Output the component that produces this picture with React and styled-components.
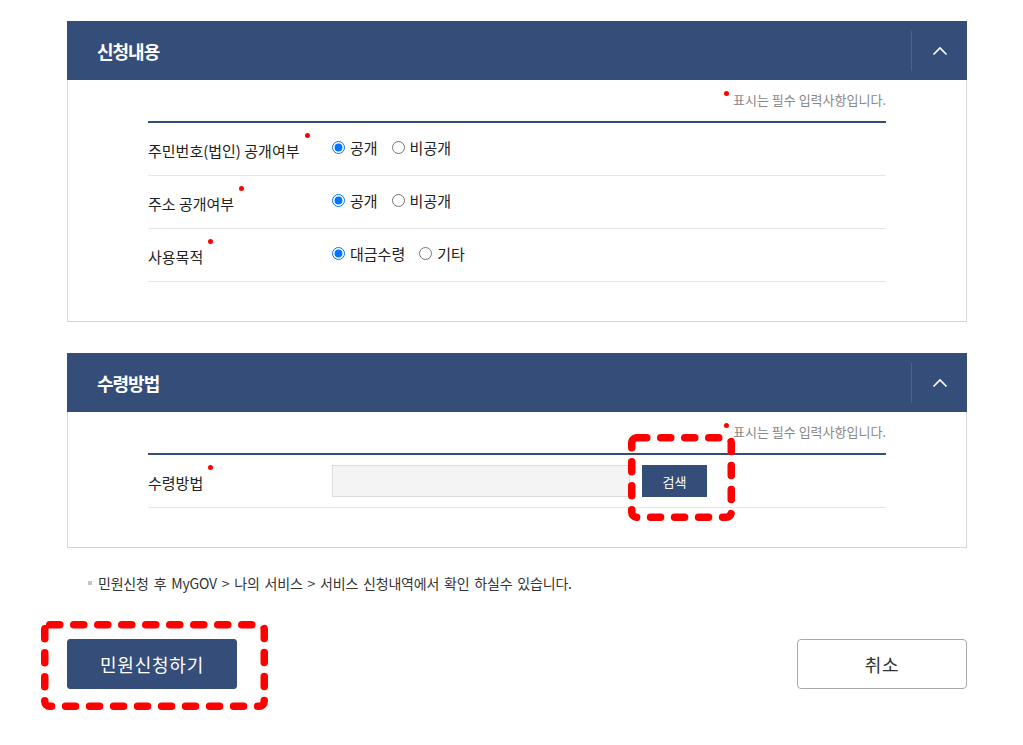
import React from "react";
import styled, { createGlobalStyle } from "styled-components";

const NAVY = "#354d79";

const GlobalStyle = createGlobalStyle`
  html, body { margin: 0; padding: 0; background: #fff; }
  body {
    font-family: "Noto Sans CJK KR", "Noto Sans", "Liberation Sans", sans-serif;
    color: #222;
  }
  * { box-sizing: border-box; }
`;

const Page = styled.div`
  width: 900px;
  margin: 21px 0 0 67px;
  padding-bottom: 40px;
`;

const Panel = styled.section`
  & + & { margin-top: 31px; }
`;

const PanelHeader = styled.div`
  height: 59px;
  background: ${NAVY};
  display: flex;
  align-items: center;
  justify-content: space-between;
  padding-left: 30px;
`;

const PanelTitle = styled.h2`
  margin: 0;
  font-size: 18px;
  font-weight: 700;
  color: #fff;
  letter-spacing: -1px;
`;

const Toggle = styled.button`
  width: 56px;
  height: 40px;
  border: 0;
  border-left: 1px solid rgba(255, 255, 255, 0.12);
  background: transparent;
  display: flex;
  align-items: center;
  justify-content: center;
  padding: 0;
  cursor: pointer;
`;

const PanelBody = styled.div`
  border: 1px solid #d6d6d6;
  border-top: 0;
  padding: 0 80px 39px;
`;

const RequiredNote = styled.p`
  margin: 0;
  padding-top: 10px;
  line-height: 20px;
  font-size: 13px;
  color: #888;
  text-align: right;
`;

const Dot = styled.span`
  display: inline-block;
  width: 5px;
  height: 5px;
  border-radius: 50%;
  background: #f00;
  vertical-align: top;
  margin-top: 1px;
  margin-right: 4px;
`;

const FormTable = styled.div`
  margin-top: 11px;
  border-top: 2px solid ${NAVY};
`;

const Row = styled.div`
  display: flex;
  align-items: center;
  height: 53px;
  border-bottom: 1px solid #e6e6e6;
`;

const Label = styled.div`
  width: 184px;
  flex-shrink: 0;
  padding-top: 2px;
  font-size: 15px;
  color: #222;
`;

const LabelText = styled.span`
  position: relative;
  &::after {
    content: "";
    position: absolute;
    right: -10px;
    top: -7px;
    width: 5px;
    height: 5px;
    border-radius: 50%;
    background: #f00;
  }
`;

const RadioGroup = styled.div`
  display: flex;
  align-items: center;
  gap: 14px;
  margin-top: -4px;
`;

const RadioItem = styled.label`
  display: inline-flex;
  align-items: center;
  gap: 5px;
  font-size: 15px;
  color: #222;
  cursor: pointer;
`;

const Radio = styled.input.attrs({ type: "radio" })`
  margin: 0;
  width: 13px;
  height: 13px;
`;

const FieldGroup = styled.div`
  display: flex;
  align-items: center;
  gap: 12px;
`;

const TextInput = styled.input`
  width: 298px;
  height: 32px;
  border: 1px solid #dcdcdc;
  background: #f4f4f4;
  padding: 0 8px;
  font-family: inherit;
  font-size: 14px;
`;

const AnnotatedWrap = styled.div`
  position: relative;
  display: inline-flex;
`;

const SearchButton = styled.button`
  width: 65px;
  height: 32px;
  border: 0;
  background: ${NAVY};
  color: #fff;
  font-family: inherit;
  font-size: 13px;
  cursor: pointer;
`;

const Highlight = styled.svg`
  position: absolute;
  left: ${(p) => p.$left}px;
  top: ${(p) => p.$top}px;
  pointer-events: none;
  overflow: visible;
`;

const Info = styled.p`
  margin: 26px 0 0;
  padding-left: 22px;
  position: relative;
  font-size: 14px;
  line-height: 18px;
  color: #333;
  letter-spacing: -0.2px;
  word-spacing: 2px;
  &::before {
    content: "";
    position: absolute;
    left: 21px;
    top: 7px;
    width: 4px;
    height: 4px;
    background: #c4c4c4;
  }
  & > span { padding-left: 9px; }
`;

const Actions = styled.div`
  margin-top: 47px;
  display: flex;
  justify-content: space-between;
  align-items: center;
`;

const ActionButton = styled.button`
  width: 170px;
  height: 50px;
  border-radius: ${(p) => (p.$primary ? "3px" : "4px")};
  border: 1px solid ${(p) => (p.$primary ? NAVY : "#a9a9a9")};
  background: ${(p) => (p.$primary ? NAVY : "#fff")};
  color: ${(p) => (p.$primary ? "#fff" : "#333")};
  font-family: inherit;
  font-size: 18px;
  letter-spacing: 0.8px;
  cursor: pointer;
`;

function Chevron() {
  return (
    <svg width="16" height="10" viewBox="0 0 16 10">
      <path d="M1.5 8.5 L8 2 L14.5 8.5" fill="none" stroke="#fff" strokeWidth="1.6" />
    </svg>
  );
}

function DashedBox({ left, top, width, height }) {
  const sw = 7.5;
  return (
    <Highlight $left={left} $top={top} width={width} height={height}>
      <rect
        x={sw / 2}
        y={sw / 2}
        width={width - sw}
        height={height - sw}
        rx="5"
        fill="none"
        stroke="#ff0000"
        strokeWidth={sw}
        strokeLinecap="round"
        strokeDasharray="10 14"
      />
    </Highlight>
  );
}

function PanelFrame({ title, children }) {
  return (
    <Panel>
      <PanelHeader>
        <PanelTitle>{title}</PanelTitle>
        <Toggle aria-label="접기">
          <Chevron />
        </Toggle>
      </PanelHeader>
      <PanelBody>
        <RequiredNote>
          <Dot />
          표시는 필수 입력사항입니다.
        </RequiredNote>
        <FormTable>{children}</FormTable>
      </PanelBody>
    </Panel>
  );
}

function RadioRow({ label, name, options }) {
  return (
    <Row>
      <Label>
        <LabelText>{label}</LabelText>
      </Label>
      <RadioGroup>
        {options.map((o, i) => (
          <RadioItem key={o}>
            <Radio name={name} defaultChecked={i === 0} />
            {o}
          </RadioItem>
        ))}
      </RadioGroup>
    </Row>
  );
}

export default function App() {
  return (
    <>
      <GlobalStyle />
      <Page>
        <PanelFrame title="신청내용">
          <RadioRow label="주민번호(법인) 공개여부" name="rrn" options={["공개", "비공개"]} />
          <RadioRow label="주소 공개여부" name="addr" options={["공개", "비공개"]} />
          <RadioRow label="사용목적" name="purpose" options={["대금수령", "기타"]} />
        </PanelFrame>

        <PanelFrame title="수령방법">
          <Row>
            <Label>
              <LabelText>수령방법</LabelText>
            </Label>
            <FieldGroup>
              <TextInput readOnly />
              <AnnotatedWrap>
                <SearchButton>검색</SearchButton>
                <DashedBox left={-14} top={-31} width={107} height={87} />
              </AnnotatedWrap>
            </FieldGroup>
          </Row>
        </PanelFrame>

        <Info>
          <span>민원신청 후 MyGOV &gt; 나의 서비스 &gt; 서비스 신청내역에서 확인 하실수 있습니다.</span>
        </Info>

        <Actions>
          <AnnotatedWrap>
            <ActionButton $primary>민원신청하기</ActionButton>
            <DashedBox left={-26} top={-18} width={227} height={89} />
          </AnnotatedWrap>
          <ActionButton>취소</ActionButton>
        </Actions>
      </Page>
    </>
  );
}
